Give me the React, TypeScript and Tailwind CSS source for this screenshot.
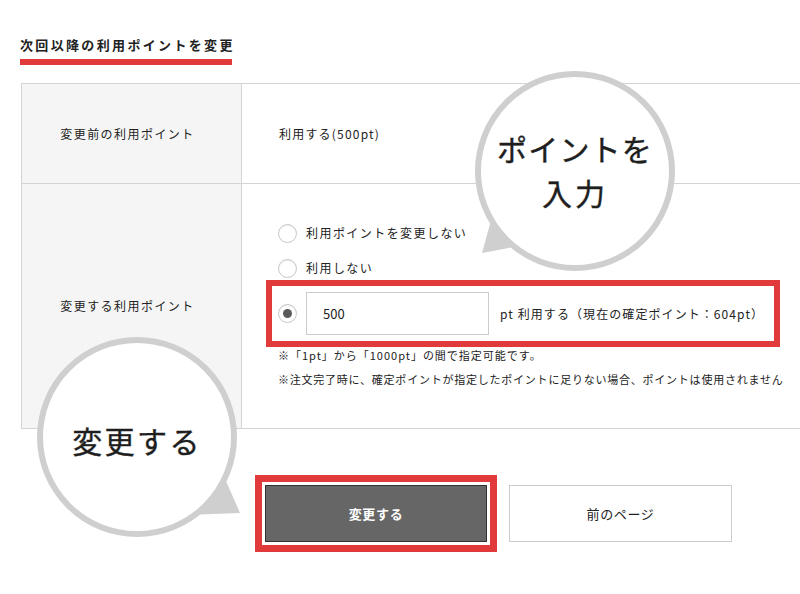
import React from "react";

const font = { fontFamily: '"Noto Sans CJK JP", "Noto Sans", sans-serif' };

function Radio({ checked = false }: { checked?: boolean }) {
  return (
    <span className="w-[19px] h-[19px] shrink-0 rounded-full border border-[#c8c8c8] bg-white shadow-[inset_0_1px_1px_rgba(0,0,0,0.08)] flex items-center justify-center">
      {checked && <span className="w-[9px] h-[9px] rounded-full bg-[#5a5a5a]" />}
    </span>
  );
}

function Bubble({
  className,
  tail,
  children,
}: {
  className: string;
  tail: string;
  children: React.ReactNode;
}) {
  return (
    <div className={`absolute w-[200px] h-[200px] ${className}`}>
      <svg className="absolute inset-0 overflow-visible" width="200" height="200">
        <polygon points={tail} fill="#cfcfcf" />
      </svg>
      <div className="relative w-full h-full rounded-full border-[6px] border-[#cfcfcf] bg-white flex flex-col items-center justify-center text-[#1e1e1e] font-normal [-webkit-text-stroke:0.4px_#1e1e1e]">
        {children}
      </div>
    </div>
  );
}

export default function App() {
  return (
    <div className="relative w-[800px] h-[594px] overflow-hidden bg-white text-[#222]" style={font}>
      <div className="pt-[36px] pl-[20px]">
        <h1 className="text-[13px] leading-[18px] font-bold tracking-[0.18em] whitespace-nowrap">
          次回以降の利用ポイントを変更
        </h1>
        <div className="mt-[5px] w-[212px] h-[6px] bg-[#e03a3a]" />
      </div>

      <div className="ml-[21px] mt-[18px] w-[800px] border-t border-l border-b border-[#d4d4d4]">
        <div className="flex h-[100px] border-b border-[#d4d4d4]">
          <div className="w-[220px] shrink-0 bg-[#f5f5f5] border-r border-[#d4d4d4] flex items-center justify-center pr-[8px] text-[12px] tracking-[0.12em]">
            変更前の利用ポイント
          </div>
          <div className="flex items-center pl-[37px] text-[12px] tracking-[0.1em]">
            利用する(500pt)
          </div>
        </div>
        <div className="flex h-[244px]">
          <div className="w-[220px] shrink-0 bg-[#f5f5f5] border-r border-[#d4d4d4] flex items-center justify-center pr-[8px] text-[12px] tracking-[0.12em]">
            変更する利用ポイント
          </div>
          <div className="flex flex-col pl-[36px] pt-[39px] text-[12px]">
            <label className="flex items-center gap-[9px] h-[20px] tracking-[0.12em]">
              <Radio />
              <span>利用ポイントを変更しない</span>
            </label>
            <label className="flex items-center gap-[9px] h-[20px] mt-[15px] tracking-[0.12em]">
              <Radio />
              <span>利用しない</span>
            </label>
            <div className="mt-[2px] -ml-[12px] w-[514px] h-[67px] border-[6px] border-[#e03a3a] flex items-center pl-[6px]">
              <Radio checked />
              <div className="ml-[9px] w-[183px] h-[43px] border border-[#cccccc] flex items-center pl-[16px] text-[13px]">
                500
              </div>
              <span className="ml-[11px] text-[12px] tracking-[0.09em] whitespace-nowrap">
                pt 利用する（現在の確定ポイント：604pt）
              </span>
            </div>
            <p className="text-[11px] leading-[16px] tracking-[0.09em] whitespace-nowrap">
              ※「1pt」から「1000pt」の間で指定可能です。
            </p>
            <p className="mt-[8px] text-[11px] leading-[16px] tracking-[0.07em] whitespace-nowrap">
              ※注文完了時に、確定ポイントが指定したポイントに足りない場合、ポイントは使用されません
            </p>
          </div>
        </div>
      </div>

      <div className="flex items-start ml-[255px] mt-[46px] gap-[12px]">
        <div className="border-[7px] border-[#e03a3a] p-[3px] bg-white">
          <button className="w-[222px] h-[57px] bg-[#666666] border border-[#333] text-white text-[13px] font-bold tracking-[0.05em]">
            変更する
          </button>
        </div>
        <button className="mt-[10px] w-[223px] h-[57px] bg-white border border-[#cccccc] text-[13px] tracking-[0.05em]">
          前のページ
        </button>
      </div>

      <Bubble className="left-[475px] top-[71px]" tail="7,182 20,135 60,172">
        <span className="text-[30px] leading-[44px] tracking-[0.04em] mt-[-2px]">ポイントを</span>
        <span className="text-[30px] leading-[44px] tracking-[0.1em]">入力</span>
      </Bubble>

      <Bubble className="left-[37px] top-[337px]" tail="203,176 182,128 150,178">
        <span className="text-[30px] leading-[40px] tracking-[0.08em] mt-[6px]">変更する</span>
      </Bubble>
    </div>
  );
}
